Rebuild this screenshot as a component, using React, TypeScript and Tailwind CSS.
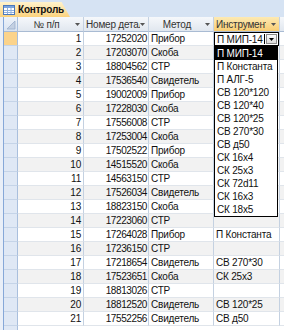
import React from 'react'

const rows: [number, string, string, string][] = [
  [1, '17252020', 'Прибор', ''],
  [2, '17203070', 'Скоба', ''],
  [3, '18804562', 'СТР', ''],
  [4, '17536540', 'Свидетель', ''],
  [5, '19002009', 'Прибор', ''],
  [6, '17228030', 'Скоба', ''],
  [7, '17556008', 'СТР', ''],
  [8, '17253004', 'Скоба', ''],
  [9, '17502522', 'Прибор', ''],
  [10, '14515520', 'Скоба', ''],
  [11, '14563150', 'СТР', ''],
  [12, '17526034', 'Свидетель', ''],
  [13, '18823150', 'Скоба', ''],
  [14, '17223060', 'СТР', ''],
  [15, '17264028', 'Прибор', 'П Константа'],
  [16, '17236150', 'СТР', ''],
  [17, '17218654', 'Свидетель', 'СВ 270*30'],
  [18, '17523651', 'Скоба', 'СК 25х3'],
  [19, '18813026', 'СТР', ''],
  [20, '18812520', 'Свидетель', 'СВ 120*25'],
  [21, '17552256', 'Свидетель', 'СВ д50'],
]

const options = [
  'П МИП-14',
  'П Константа',
  'П АЛГ-5',
  'СВ 120*120',
  'СВ 120*40',
  'СВ 120*25',
  'СВ 270*30',
  'СВ д50',
  'СК 16х4',
  'СК 25х3',
  'СК 72d11',
  'СК 16х3',
  'СК 18х5',
]

function Arrow({ color = '#555' }: { color?: string }) {
  return (
    <svg width="5" height="3" viewBox="0 0 5 3" className="shrink-0">
      <polygon points="0,0 5,0 2.5,3" fill={color} />
    </svg>
  )
}

function TableIcon() {
  return (
    <svg width="12" height="10" viewBox="0 0 12 10" className="shrink-0">
      <rect x="0.5" y="0.5" width="11" height="9" fill="#fff" stroke="#4a78bd" />
      <rect x="1" y="1" width="10" height="2" fill="#7ba4dd" />
      <path d="M1 5.5H11M1 7.5H11M4.5 3V9M8 3V9" stroke="#8fb0de" strokeWidth="1" />
    </svg>
  )
}

function Header({
  label,
  width,
  active,
  clip,
}: {
  label: string
  width: string
  active?: boolean
  clip?: string
}) {
  return (
    <div
      className={
        width +
        ' h-full flex items-center border-r border-b border-r-[#c4d1e1] border-b-[#a9bbd3] overflow-hidden ' +
        (active
          ? 'bg-gradient-to-b from-[#fdeab3] to-[#f8cd72]'
          : 'bg-gradient-to-b from-[#f6f8fb] to-[#e1e7ef]')
      }
    >
      {clip ? (
        <span className={clip + ' pl-[2px] whitespace-nowrap overflow-hidden text-[#333]'}>{label}</span>
      ) : (
        <span className="flex-1 text-center whitespace-nowrap overflow-hidden text-[#333]">{label}</span>
      )}
      <span className="ml-auto mr-[3px]">
        <Arrow />
      </span>
    </div>
  )
}

export default function App() {
  return (
    <div className="w-[284px] h-[330px] overflow-hidden bg-white font-['Liberation_Sans',Arial,sans-serif] text-[10px] tracking-[-0.2px] leading-[13px] text-[#111]">
      {/* tab bar */}
      <div className="h-[17px] bg-[#d6e3f3] flex items-end">
        <div className="h-[15px] w-[70px] flex items-center gap-[3px] pl-[3px] bg-gradient-to-b from-[#fff3cc] to-[#fbd27c] [clip-path:polygon(0_0,88%_0,100%_100%,0_100%)]">
          <TableIcon />
          <span className="font-bold">Контроль</span>
        </div>
      </div>

      {/* grid */}
      <div className="relative flex h-[313px] bg-[#e9eff8] pl-[3px]">
        <div className="flex-1 flex flex-col border-l border-[#86a8d8] bg-white">
          {/* header */}
          <div className="flex h-[15px] shrink-0">
            <div className="w-[14px] h-full flex items-end justify-end pr-[1px] pb-[1px] border-r border-b border-r-[#a9bfdd] border-b-[#a9bbd3] bg-gradient-to-b from-[#eef3fa] to-[#d9e3f1]">
              <svg width="9" height="9" viewBox="0 0 9 9">
                <polygon points="8,0 8,8 0,8" fill="#c3d0e2" stroke="#9aafcc" strokeWidth="0.8" />
              </svg>
            </div>
            <Header label="№ п/п" width="w-[66px]" />
            <Header label="Номер детали" width="w-[65px]" clip="w-[56px] shrink-0" />
            <Header label="Метод" width="w-[65px]" />
            <Header label="Инструмент" width="w-[66px]" active clip="w-[52px] shrink-0" />
            <div className="flex-1 h-full border-b border-[#a9bbd3] bg-gradient-to-b from-[#f6f8fb] to-[#e1e7ef]" />
          </div>

          {/* rows */}
          {rows.map(([n, part, method, tool]) => {
            const even = n % 2 === 0
            const bg = even ? 'bg-[#f2f2f2]' : 'bg-white'
            const cell = 'h-full border-r border-b border-r-[#c4d1e1] border-b-[#e0e5eb] overflow-hidden whitespace-nowrap ' + bg
            return (
              <div key={n} className="flex h-[14px] shrink-0">
                <div
                  className={
                    'w-[14px] h-full border-r border-b border-r-[#a9bfdd] border-b-[#c5d4e8] ' +
                    (n === 1 ? 'bg-[#fbd38b]' : 'bg-[#dfe8f5]')
                  }
                />
                <div className={'w-[66px] text-right pr-[2px] ' + cell}>{n}</div>
                <div className={'w-[65px] text-right pr-[1px] tracking-[-0.4px] ' + cell}>{part}</div>
                <div className={'w-[65px] pl-[2px] ' + cell}>{method}</div>
                {n === 1 ? (
                  <div className="w-[66px] h-full border-r border-[#c4d1e1] bg-white">
                    <div className="h-full flex items-center border border-black">
                      <span className="pl-[2px] whitespace-nowrap">П МИП-14</span>
                      <span className="w-px h-[10px] bg-black ml-[1px]" />
                      <span className="ml-auto mr-[1px] w-[11px] h-[10px] flex items-center justify-center border border-[#8c8c8c] bg-gradient-to-b from-[#fbfbfb] to-[#dadada]">
                        <Arrow color="#000" />
                      </span>
                    </div>
                  </div>
                ) : (
                  <div className={'w-[66px] pl-[2px] ' + cell}>{tool}</div>
                )}
                <div className={'flex-1 h-full border-b border-[#e0e5eb] ' + bg} />
              </div>
            )
          })}
          <div className="flex h-[14px] shrink-0">
            <div className="w-[14px] h-full border-r border-[#a9bfdd] bg-[#dfe8f5]" />
            <div className="flex-1 h-full bg-white" />
          </div>
        </div>

        {/* open combo list */}
        <div className="absolute left-[214px] top-[29px] w-[64px] border border-black bg-white">
          {options.map((o, i) => (
            <div
              key={o}
              className={
                'h-[13px] pl-[2px] whitespace-nowrap overflow-hidden ' +
                (i === 0 ? 'bg-black text-white' : 'text-[#111]')
              }
            >
              {o}
            </div>
          ))}
        </div>
      </div>
    </div>
  )
}
